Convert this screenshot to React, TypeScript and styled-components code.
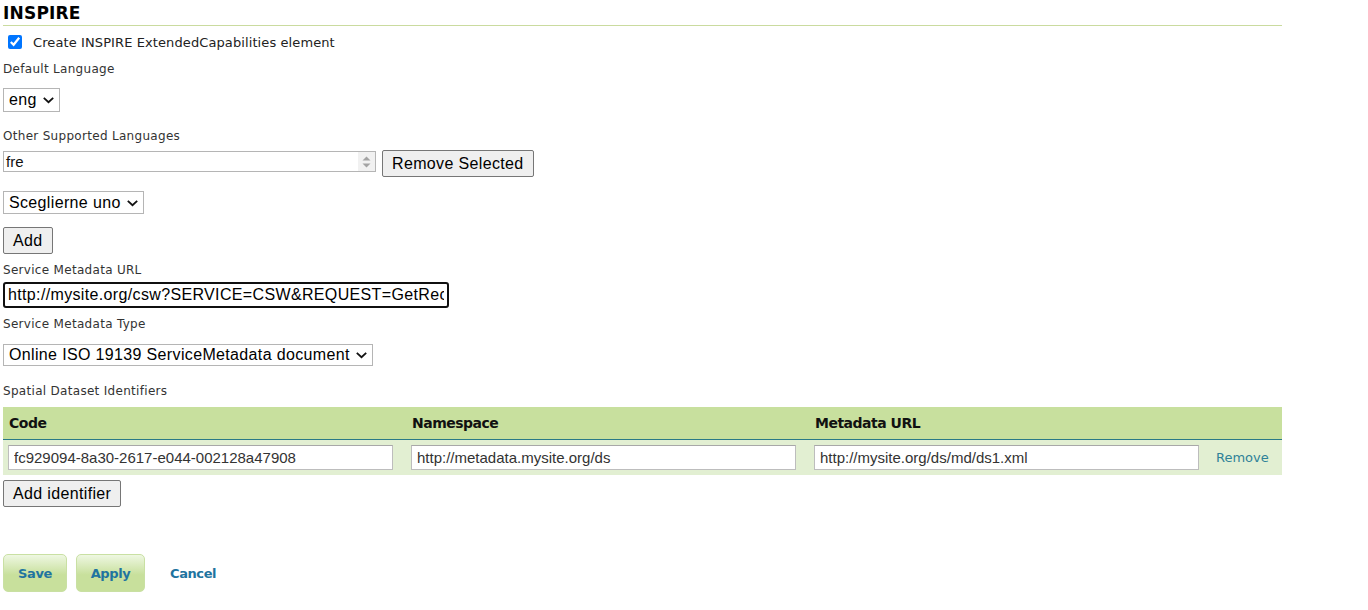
import React from "react";
import styled, { createGlobalStyle } from "styled-components";

const Global = createGlobalStyle`
  html, body { margin: 0; padding: 0; background: #fff; }
  body { font-family: "DejaVu Sans", Verdana, sans-serif; color: #222; }
`;

const Page = styled.div`
  padding: 0 86px 0 3px;
  width: 1279px;
  display: flex;
  flex-direction: column;
  align-items: flex-start;
`;

const Heading = styled.h2`
  margin: 0;
  align-self: stretch;
  font-family: "DejaVu Sans", Verdana, sans-serif;
  font-weight: bold;
  font-size: 17px;
  letter-spacing: 0.2px;
  line-height: 20px;
  padding-top: 3px;
  height: 22px;
  border-bottom: 1px solid #cadb9f;
  color: #000;
`;

const CheckRow = styled.label`
  margin-top: 8px;
  height: 16px;
  display: flex;
  align-items: center;
  gap: 11px;
  padding-left: 5px;
  font-size: 13px;
  letter-spacing: 0.1px;
  color: #222;
`;

const Check = styled.input`
  margin: 0;
  width: 14px;
  height: 14px;
`;

const Label = styled.div<{ $mt: number }>`
  margin-top: ${(p) => p.$mt}px;
  height: 16px;
  line-height: 16px;
  font-size: 12px;
  letter-spacing: 0.3px;
  color: #333;
`;

const SelectBox = styled.div<{ $mt: number; $h: number }>`
  margin-top: ${(p) => p.$mt}px;
  height: ${(p) => p.$h}px;
  box-sizing: border-box;
  border: 1px solid #b5b5b5;
  background: #fff;
  display: flex;
  align-items: center;
  gap: 5px;
  padding: 0 4px 0 5px;
  font-family: "Liberation Sans", Arial, sans-serif;
  font-size: 16px;
  letter-spacing: 0.35px;
  color: #000;
`;

const Chevron = () => (
  <svg width="13" height="8" viewBox="0 0 13 8">
    <path d="M1.8 1.8l4.7 4.4 4.7-4.4" fill="none" stroke="#111" strokeWidth="1.8" />
  </svg>
);

const ListRow = styled.div`
  margin-top: 6px;
  display: flex;
  align-items: flex-start;
  gap: 6px;
`;

const ListBox = styled.div`
  margin-top: 1px;
  width: 373px;
  height: 21px;
  box-sizing: border-box;
  border: 1px solid #b5b5b5;
  display: flex;
  background: #fff;
`;

const ListText = styled.div`
  flex: 1;
  padding-left: 2px;
  font-family: "Liberation Sans", Arial, sans-serif;
  font-size: 15px;
  line-height: 19px;
  color: #111;
`;

const ScrollStrip = styled.div`
  width: 17px;
  background: #f1f1f1;
  display: flex;
  flex-direction: column;
  align-items: center;
  justify-content: center;
  gap: 2px;
`;

const Button = styled.button<{ $mt?: number }>`
  margin-top: ${(p) => p.$mt ?? 0}px;
  height: 27px;
  box-sizing: border-box;
  padding: 0 9px;
  border: 1px solid #767676;
  border-radius: 2px;
  background: #efefef;
  font-family: "Liberation Sans", Arial, sans-serif;
  font-size: 16px;
  letter-spacing: 0.35px;
  color: #000;
`;

const UrlInput = styled.input`
  margin-top: 4px;
  width: 446px;
  height: 26px;
  box-sizing: border-box;
  border: 2px solid #101010;
  border-radius: 3px;
  padding: 0 3px;
  font-family: "Liberation Sans", Arial, sans-serif;
  font-size: 16px;
  letter-spacing: 0.35px;
  color: #000;
  outline: none;
`;

const Table = styled.div`
  margin-top: 8px;
  align-self: stretch;
  display: grid;
  grid-template-columns: 403px 403px 402px 1fr;
`;

const Th = styled.div`
  height: 32px;
  background: #c8e09e;
  border-bottom: 1px solid #2a7a86;
  display: flex;
  align-items: center;
  padding-left: 6px;
  font-weight: bold;
  font-size: 14px;
  letter-spacing: -0.5px;
  color: #111;
`;

const Td = styled.div`
  height: 35px;
  background: #e2efd2;
  display: flex;
  align-items: center;
  padding-left: 5px;
`;

const CellInput = styled.input`
  width: 385px;
  height: 25px;
  box-sizing: border-box;
  border: 1px solid #bdbdbd;
  border-top-color: #a8a8a8;
  padding: 0 5px;
  font-family: "Liberation Sans", Arial, sans-serif;
  font-size: 15px;
  color: #333;
  outline: none;
`;

const RemoveLink = styled.a`
  font-size: 13px;
  color: #2f8298;
  text-decoration: none;
`;

const Actions = styled.div`
  margin-top: 47px;
  display: flex;
  align-items: center;
  gap: 9px;
`;

const GreenButton = styled.button<{ $w: number }>`
  width: ${(p) => p.$w}px;
  height: 38px;
  border: 1px solid #c9e0a3;
  border-radius: 5px;
  background: linear-gradient(#eef7e2, #c8e09c 55%);
  font-family: "DejaVu Sans", Verdana, sans-serif;
  font-weight: bold;
  font-size: 13px;
  letter-spacing: -0.4px;
  color: #1f74a0;
`;

const CancelLink = styled.a`
  margin-left: 16px;
  font-weight: bold;
  font-size: 13px;
  letter-spacing: -0.4px;
  color: #1f74a0;
  text-decoration: none;
`;

const Up = () => (
  <svg width="9" height="5" viewBox="0 0 9 5"><path d="M0.5 4.5L4.5 0.5 8.5 4.5z" fill="#a3a3a3" /></svg>
);
const Down = () => (
  <svg width="9" height="5" viewBox="0 0 9 5"><path d="M0.5 0.5L4.5 4.5 8.5 0.5z" fill="#a3a3a3" /></svg>
);

export default function App() {
  return (
    <Page>
      <Global />
      <Heading>INSPIRE</Heading>
      <CheckRow>
        <Check type="checkbox" defaultChecked />
        Create INSPIRE ExtendedCapabilities element
      </CheckRow>
      <Label $mt={11}>Default Language</Label>
      <SelectBox $mt={11} $h={24}>
        eng <Chevron />
      </SelectBox>
      <Label $mt={16}>Other Supported Languages</Label>
      <ListRow>
        <ListBox>
          <ListText>fre</ListText>
          <ScrollStrip>
            <Up />
            <Down />
          </ScrollStrip>
        </ListBox>
        <Button>Remove Selected</Button>
      </ListRow>
      <SelectBox $mt={14} $h={23}>
        Sceglierne uno <Chevron />
      </SelectBox>
      <Button $mt={13}>Add</Button>
      <Label $mt={8}>Service Metadata URL</Label>
      <UrlInput readOnly value="http://mysite.org/csw?SERVICE=CSW&REQUEST=GetRecordById&ID=1" />
      <Label $mt={8}>Service Metadata Type</Label>
      <SelectBox $mt={12} $h={22}>
        Online ISO 19139 ServiceMetadata document <Chevron />
      </SelectBox>
      <Label $mt={17}>Spatial Dataset Identifiers</Label>
      <Table>
        <Th>Code</Th>
        <Th>Namespace</Th>
        <Th>Metadata URL</Th>
        <Th />
        <Td><CellInput readOnly value="fc929094-8a30-2617-e044-002128a47908" /></Td>
        <Td><CellInput readOnly value="http://metadata.mysite.org/ds" /></Td>
        <Td><CellInput readOnly value="http://mysite.org/ds/md/ds1.xml" /></Td>
        <Td><RemoveLink href="#">Remove</RemoveLink></Td>
      </Table>
      <Button $mt={5}>Add identifier</Button>
      <Actions>
        <GreenButton $w={64}>Save</GreenButton>
        <GreenButton $w={69}>Apply</GreenButton>
        <CancelLink href="#">Cancel</CancelLink>
      </Actions>
    </Page>
  );
}
